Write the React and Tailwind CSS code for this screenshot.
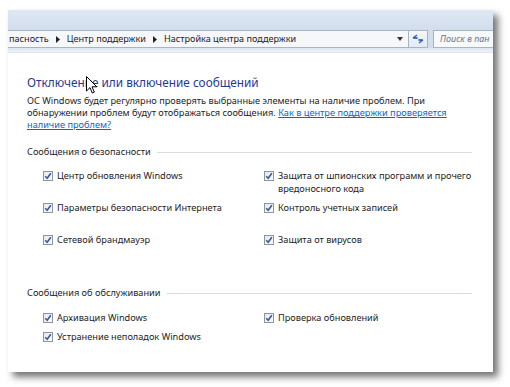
import React from 'react';

const FONT = { fontFamily: '"Noto Sans", "Open Sans", sans-serif' };

function Check() {
  return (
    <span className="w-[10px] h-[10px] shrink-0 border border-[#8f959c] bg-gradient-to-br from-[#e4e8ee] to-[#fbfcfd] flex items-center justify-center">
      <svg width="8" height="8" viewBox="0 0 8 8">
        <path d="M1.2 4.2 L3.2 6.3 L6.8 1.2" fill="none" stroke="#3d5a9e" strokeWidth="1.6" />
      </svg>
    </span>
  );
}

function Item({ children }) {
  return (
    <div className="flex items-start gap-[4px] text-[9.2px] leading-[13px] text-[#1e1e1e]">
      <span className="mt-[1.5px]"><Check /></span>
      <span>{children}</span>
    </div>
  );
}

function SectionHead({ children }) {
  return (
    <div className="flex items-center h-[14px] mr-[21px]">
      <span className="text-[9.2px] text-[#1e1e1e] whitespace-nowrap">{children}</span>
      <span className="flex-1 h-px bg-[#d6dde4] ml-[6px]" />
    </div>
  );
}

function Crumb() {
  return (
    <svg width="4" height="7" viewBox="0 0 4 7" className="mx-[7px]">
      <path d="M0 0 L4 3.5 L0 7 Z" fill="#222" />
    </svg>
  );
}

export default function App() {
  return (
    <div className="w-[510px] h-[387px] bg-white overflow-hidden relative" style={FONT}>
      <div className="ml-[8px] mt-[10px] w-[485px] h-[362px] bg-white flex flex-col shadow-[5px_5px_7px_rgba(0,0,0,0.55)]">
        <div className="h-[20px] bg-gradient-to-b from-[#dfe8f4] to-[#d2deec]" />
        <div className="h-[18px] bg-[#d2deec] flex items-stretch pr-0">
          <div className="flex-1 flex items-center bg-[#f5f7fa] border border-l-0 border-[#a9b4c2] text-[9.1px] text-[#1e1e1e] whitespace-nowrap overflow-hidden">
            <span className="ml-[1px]">пасность</span>
            <Crumb />
            <span>Центр поддержки</span>
            <Crumb />
            <span className="flex-1">Настройка центра поддержки</span>
            <svg width="6" height="4" viewBox="0 0 6 4" className="mr-[5px]">
              <path d="M0 0 L6 0 L3 4 Z" fill="#333" />
            </svg>
          </div>
          <div className="w-[19px] border border-l-0 border-[#a9b4c2] bg-gradient-to-b from-[#f4f7fb] to-[#e3eaf3] flex items-center justify-center">
            <svg width="12" height="10" viewBox="0 0 12 10">
              <path d="M1 4 L5 1 M1 4 L5 4" stroke="#2a62c4" strokeWidth="1.4" fill="none" />
              <path d="M11 6 L7 9 M11 6 L7 6" stroke="#2a62c4" strokeWidth="1.4" fill="none" />
              <path d="M2 4 L6 4 M6 6 L10 6" stroke="#2a62c4" strokeWidth="1.2" />
            </svg>
          </div>
          <div className="w-[5px]" />
          <div className="w-[60px] border border-r-0 border-[#a9b4c2] bg-[#f7f9fb] flex items-center pl-[6px] text-[9px] italic text-[#6d7683] whitespace-nowrap overflow-hidden">
            Поиск в пан
          </div>
        </div>
        <div className="h-[5px] bg-gradient-to-b from-[#dde7f2] to-[#eef3f8] border-b border-[#dfe6ee]" />

        <div className="flex-1 pl-[19px] pt-[19px] bg-white">
          <div className="text-[11.8px] leading-[20px] text-[#1e3a93]">Отключение или включение сообщений</div>
          <div className="mt-[3px] text-[9.2px] leading-[12px] text-[#1e1e1e]">
            ОС Windows будет регулярно проверять выбранные элементы на наличие проблем. При
            <br />
            обнаружении проблем будут отображаться сообщения.{' '}
            <span className="text-[#0b66c4] underline">Как в центре поддержки проверяется</span>
            <br />
            <span className="text-[#0b66c4] underline">наличие проблем?</span>
          </div>

          <div className="mt-[14px]">
            <SectionHead>Сообщения о безопасности</SectionHead>
          </div>
          <div className="mt-[10px] ml-[16px] grid grid-cols-[221px_1fr] auto-rows-[32px]">
            <Item>Центр обновления Windows</Item>
            <Item>Защита от шпионских программ и прочего<br />вредоносного кода</Item>
            <Item>Параметры безопасности Интернета</Item>
            <Item>Контроль учетных записей</Item>
            <Item>Сетевой брандмауэр</Item>
            <Item>Защита от вирусов</Item>
          </div>

          <div className="mt-[21px]">
            <SectionHead>Сообщения об обслуживании</SectionHead>
          </div>
          <div className="mt-[11px] ml-[16px] grid grid-cols-[221px_1fr] auto-rows-[19px]">
            <Item>Архивация Windows</Item>
            <Item>Проверка обновлений</Item>
            <Item>Устранение неполадок Windows</Item>
          </div>
        </div>
      </div>

      <svg className="absolute left-[86px] top-[76px]" width="12" height="19" viewBox="0 0 12 19">
        <path d="M0.5 0.5 L0.5 15 L4 11.6 L6.3 17 L8.3 16.1 L6 10.8 L10.8 10.8 Z" fill="#fff" stroke="#000" strokeWidth="1" />
      </svg>
    </div>
  );
}
